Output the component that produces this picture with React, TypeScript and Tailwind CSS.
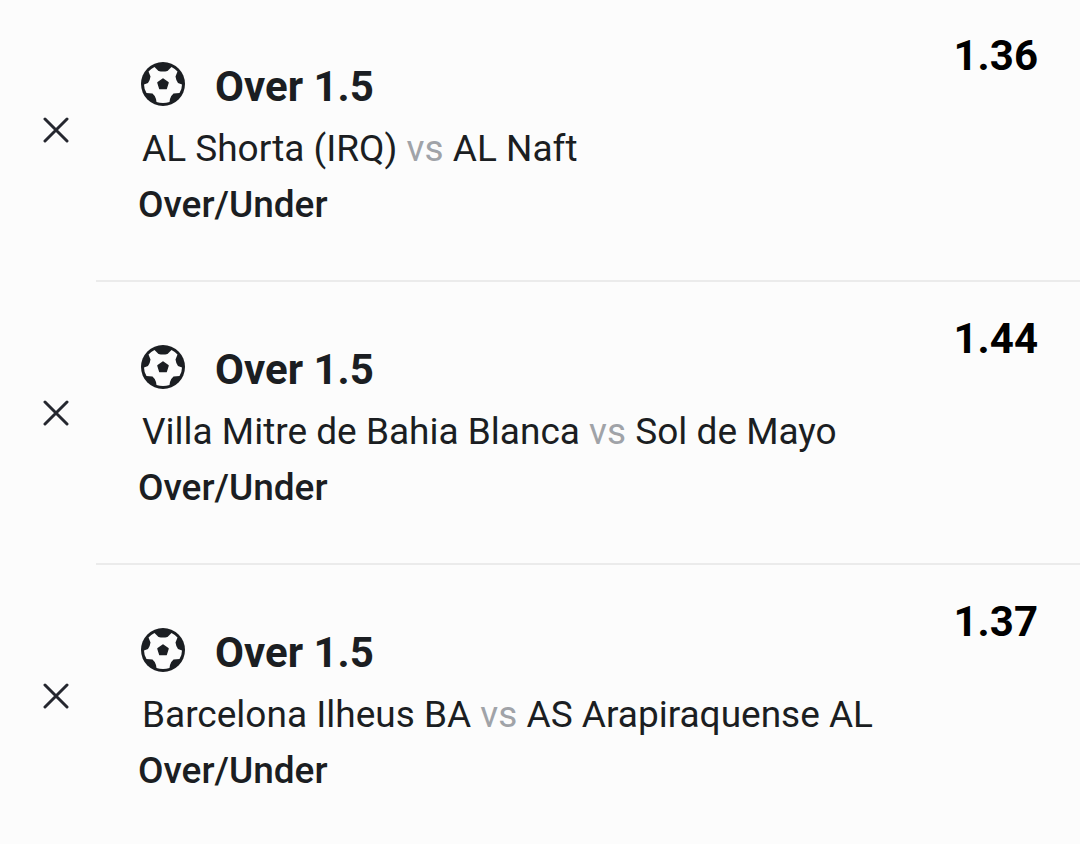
import React from 'react';

interface Selection {
  id: number;
  pick: string;
  home: string;
  away: string;
  market: string;
  odds: string;
}

const selections: Selection[] = [
  { id: 1, pick: 'Over 1.5', home: 'AL Shorta (IRQ)', away: 'AL Naft', market: 'Over/Under', odds: '1.36' },
  { id: 2, pick: 'Over 1.5', home: 'Villa Mitre de Bahia Blanca', away: 'Sol de Mayo', market: 'Over/Under', odds: '1.44' },
  { id: 3, pick: 'Over 1.5', home: 'Barcelona Ilheus BA', away: 'AS Arapiraquense AL', market: 'Over/Under', odds: '1.37' },
];

const FootballIcon: React.FC = () => (
  <svg viewBox="0 0 44 44" className="w-11 h-11 shrink-0" aria-hidden="true">
    <circle cx="22" cy="22" r="22" fill="#1b1e22" />
    <path
      fill="#fcfcfc"
      d="M13.5 5 L17.5 9 Q22 10 26.5 9 L30.5 5 Q34 6.5 36.5 9.5 L34.5 14.5 Q35 18.5 37 21 L41 22.5 Q41 27 38.5 31 L32.5 31.5 Q30 33.5 29 37 L28.5 40 Q22 42 15.5 40 L15 37 Q14 33.5 11.5 31.5 L5.5 31 Q3 27 3 22.5 L7 21 Q9 18.5 9.5 14.5 L7.5 9.5 Q10 6.5 13.5 5 Z"
    />
    <path
      fill="#1b1e22"
      stroke="#1b1e22"
      strokeWidth="1.5"
      strokeLinejoin="round"
      d="M22 17 L27 20.7 L25.2 26.5 H18.8 L17 20.7 Z"
    />
  </svg>
);

const CloseIcon: React.FC = () => (
  <svg viewBox="0 0 26 26" className="w-[26px] h-[26px]" aria-hidden="true">
    <path d="M2 2 L24 24 M24 2 L2 24" stroke="#25272f" strokeWidth="3" strokeLinecap="round" fill="none" />
  </svg>
);

const SelectionRow: React.FC<{ item: Selection }> = ({ item }) => (
  <li className="group flex mb-px last:mb-0">
    <div className="w-24 shrink-0 pl-[43px] pt-[117px]">
      <button type="button" aria-label={`Remove ${item.home} vs ${item.away}`} className="block cursor-pointer">
        <CloseIcon />
      </button>
    </div>

    <div className="flex flex-1 justify-between px-[42px] pb-14 border-b-2 border-[#ebebeb] group-last:border-transparent">
      <div className="pt-[62px]">
        <div className="flex items-start gap-[30px] pl-[3px]">
          <FootballIcon />
          <h2 className="text-[42px] leading-[50px] font-bold">{item.pick}</h2>
        </div>
        <p className="pl-1 text-[37px] leading-[74px]">
          {item.home} <span className="text-[#a0a3a8]">vs</span> {item.away}
        </p>
        <p className="text-[37px] leading-[38px] font-medium">{item.market}</p>
      </div>
      <span className="pt-[31px] text-[42px] leading-[50px] font-bold text-black">{item.odds}</span>
    </div>
  </li>
);

const App: React.FC = () => {
  return (
    <main className="min-h-screen bg-[#fcfcfc] font-['Roboto',sans-serif] text-[#1b1e22]">
      <ul>
        {selections.map((item) => (
          <SelectionRow key={item.id} item={item} />
        ))}
      </ul>
    </main>
  );
};

export default App;
